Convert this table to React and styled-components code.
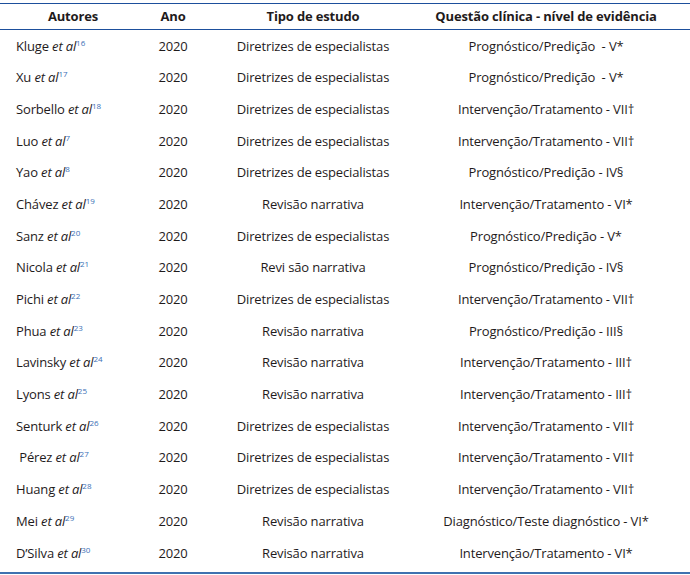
import React from "react";
import styled, { createGlobalStyle } from "styled-components";

const GlobalStyle = createGlobalStyle`
    body {
        margin: 0;
        background: #fff;
        font-family: "Open Sans", "Liberation Sans", sans-serif;
        color: #1f1b1c;
    }
`;

const Wrapper = styled.div`
    padding-top: 3px;
    width: 690px;
`;
const Table = styled.table`
    width: 690px;
    border-collapse: collapse;
    table-layout: fixed;
    border-top: 1px solid #1d4f9c;
    border-bottom: 2px solid #3f72b0;
    font-size: 13px;
    letter-spacing: -0.15px;
`;
const HeadRow = styled.tr`
    height: 26px;
    border-bottom: 1px solid #1d4f9c;
`;
const HeadCell = styled.th`
    font-weight: 700;
    text-align: center;
    padding: 0 ${p => p.$pr || 0}px 0 ${p => p.$pl || 0}px;
    vertical-align: middle;
    white-space: nowrap;
    line-height: 17px;
`;
const Row = styled.tr`
    height: 31.7px;

    &:last-child {
        height: 36px;
    }
`;
const Cell = styled.td`
    text-align: ${p => p.$left ? "left" : "center"};
    padding: 8px ${p => p.$pr || 0}px 0 ${p => p.$pl || 0}px;
    vertical-align: top;
    line-height: 17px;
    white-space: pre;
`;
const Etal = styled.i`
    font-style: italic;
`;
const Ref = styled.sup`
    font-size: 8px;
    color: #3a6fb5;
    vertical-align: baseline;
    position: relative;
    top: -5px;
    letter-spacing: 0;
`;

const rows = [
    ["Kluge", "16", "Diretrizes de especialistas", "Prognóstico/Predição  - V*"],
    ["Xu", "17", "Diretrizes de especialistas", "Prognóstico/Predição  - V*"],
    ["Sorbello", "18", "Diretrizes de especialistas", "Intervenção/Tratamento - VII†"],
    ["Luo", "7", "Diretrizes de especialistas", "Intervenção/Tratamento - VII†"],
    ["Yao", "8", "Diretrizes de especialistas", "Prognóstico/Predição - IV§"],
    ["Chávez", "19", "Revisão narrativa", "Intervenção/Tratamento - VI*"],
    ["Sanz", "20", "Diretrizes de especialistas", "Prognóstico/Predição - V*"],
    ["Nicola", "21", "Revi são narrativa", "Prognóstico/Predição - IV§"],
    ["Pichi", "22", "Diretrizes de especialistas", "Intervenção/Tratamento - VII†"],
    ["Phua", "23", "Revisão narrativa", "Prognóstico/Predição - III§"],
    ["Lavinsky", "24", "Revisão narrativa", "Intervenção/Tratamento - III†"],
    ["Lyons", "25", "Revisão narrativa", "Intervenção/Tratamento - III†"],
    ["Senturk", "26", "Diretrizes de especialistas", "Intervenção/Tratamento - VII†"],
    [" Pérez", "27", "Diretrizes de especialistas", "Intervenção/Tratamento - VII†"],
    ["Huang", "28", "Diretrizes de especialistas", "Intervenção/Tratamento - VII†"],
    ["Mei", "29", "Revisão narrativa", "Diagnóstico/Teste diagnóstico - VI*"],
    ["D’Silva", "30", "Revisão narrativa", "Intervenção/Tratamento - VI*"],
];

export default function App() {
    return (
        <Wrapper>
            <GlobalStyle />
            <Table>
                <colgroup>
                    <col style={{ width: 130 }} />
                    <col style={{ width: 86 }} />
                    <col style={{ width: 194 }} />
                    <col style={{ width: 280 }} />
                </colgroup>
                <thead>
                    <HeadRow>
                        <HeadCell $pl={16}>Autores</HeadCell>
                        <HeadCell>Ano</HeadCell>
                        <HeadCell>Tipo de estudo</HeadCell>
                        <HeadCell $pr={8}>Questão clínica - nível de evidência</HeadCell>
                    </HeadRow>
                </thead>
                <tbody>
                    {rows.map(([author, ref, type, question]) => (
                        <Row key={author}>
                            <Cell $left $pl={16}>
                                {author} <Etal>et al</Etal><Ref>{ref}</Ref>
                            </Cell>
                            <Cell>2020</Cell>
                            <Cell>{type}</Cell>
                            <Cell $pr={8}>{question}</Cell>
                        </Row>
                    ))}
                </tbody>
            </Table>
        </Wrapper>
    );
}
